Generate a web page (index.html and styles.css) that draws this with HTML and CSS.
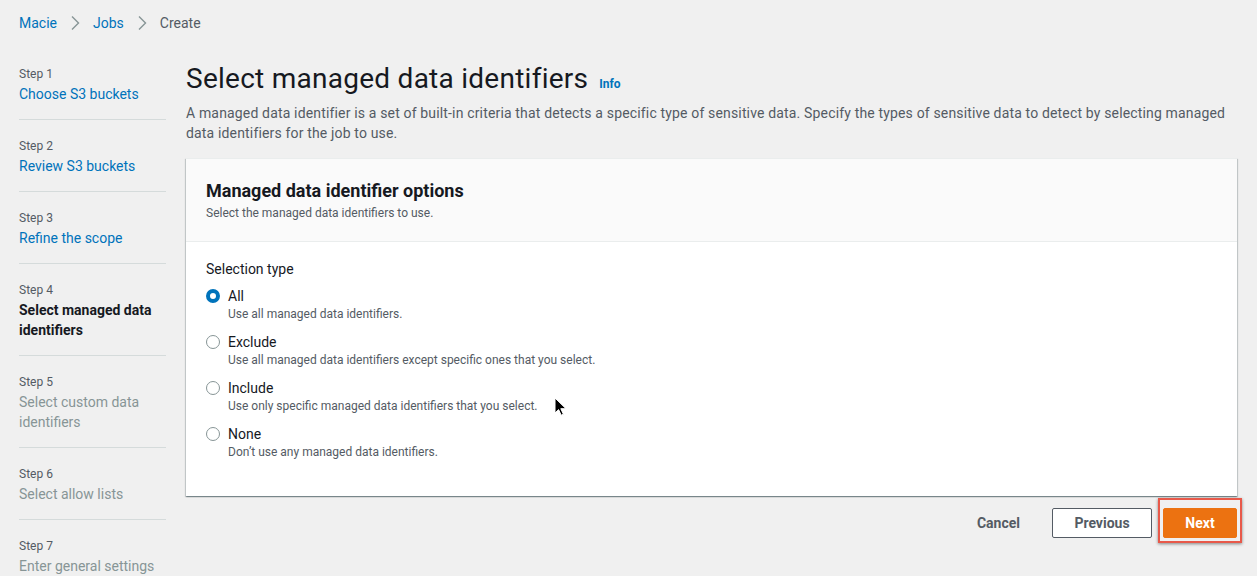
FILE: index.html
```html
<!DOCTYPE html>
<html lang="en">
<head>
<meta charset="utf-8">
<title>Select managed data identifiers</title>
<link rel="stylesheet" href="styles.css">
</head>
<body>
<div class="page">
  <nav class="breadcrumbs">
    <a class="crumb" href="#">Macie</a>
    <svg class="chev" viewBox="0 0 16 16" width="16" height="16"><path d="M5 1.5 11.5 8 5 14.5" fill="none" stroke="currentColor" stroke-width="1.4"/></svg>
    <a class="crumb" href="#">Jobs</a>
    <svg class="chev" viewBox="0 0 16 16" width="16" height="16"><path d="M5 1.5 11.5 8 5 14.5" fill="none" stroke="currentColor" stroke-width="1.4"/></svg>
    <span class="crumb current">Create</span>
  </nav>

  <div class="layout">
    <ol class="steps">
      <li class="step"><div class="step-num">Step 1</div><a class="step-link" href="#">Choose S3 buckets</a></li>
      <li class="step"><div class="step-num">Step 2</div><a class="step-link" href="#">Review S3 buckets</a></li>
      <li class="step"><div class="step-num">Step 3</div><a class="step-link" href="#">Refine the scope</a></li>
      <li class="step"><div class="step-num">Step 4</div><span class="step-link active">Select managed data identifiers</span></li>
      <li class="step"><div class="step-num">Step 5</div><span class="step-link disabled">Select custom data identifiers</span></li>
      <li class="step"><div class="step-num">Step 6</div><span class="step-link disabled">Select allow lists</span></li>
      <li class="step"><div class="step-num">Step 7</div><span class="step-link disabled">Enter general settings</span></li>
    </ol>

    <main class="main">
      <div class="page-head">
        <h1 class="title">Select managed data identifiers</h1>
        <a class="info" href="#">Info</a>
      </div>
      <p class="lead">A managed data identifier is a set of built-in criteria that detects a specific type of sensitive data. Specify the types of sensitive data to detect by selecting managed data identifiers for the job to use.</p>

      <section class="container">
        <header class="container-head">
          <h2 class="container-title">Managed data identifier options</h2>
          <p class="container-sub">Select the managed data identifiers to use.</p>
        </header>
        <div class="container-body">
          <div class="field-label">Selection type</div>
          <div class="radio-group">
            <div class="radio-item">
              <span class="radio checked"></span>
              <div class="radio-text">
                <div class="radio-label">All</div>
                <div class="radio-desc">Use all managed data identifiers.</div>
              </div>
            </div>
            <div class="radio-item">
              <span class="radio"></span>
              <div class="radio-text">
                <div class="radio-label">Exclude</div>
                <div class="radio-desc">Use all managed data identifiers except specific ones that you select.</div>
              </div>
            </div>
            <div class="radio-item">
              <span class="radio"></span>
              <div class="radio-text">
                <div class="radio-label">Include</div>
                <div class="radio-desc">Use only specific managed data identifiers that you select.</div>
              </div>
            </div>
            <div class="radio-item">
              <span class="radio"></span>
              <div class="radio-text">
                <div class="radio-label">None</div>
                <div class="radio-desc">Don’t use any managed data identifiers.</div>
              </div>
            </div>
          </div>
        </div>
      </section>

      <div class="actions">
        <button class="btn btn-link">Cancel</button>
        <button class="btn btn-normal">Previous</button>
        <span class="highlight"><button class="btn btn-primary">Next</button></span>
      </div>
    </main>
  </div>

  <svg class="cursor" viewBox="0 0 12 19" width="12" height="19"><path d="M1 1v15l3.6-3.4 2.6 5.6 2.2-1-2.6-5.5H12z" fill="#000" stroke="#fff" stroke-width="1"/></svg>
</div>
</body>
</html>
```

FILE: styles.css
```css
* { box-sizing: border-box; }
html, body { margin: 0; padding: 0; }
body {
  background: #f0f0f0;
  font-family: Roboto, "Liberation Sans", Arial, sans-serif;
  color: #16191f;
  font-size: 14px;
  line-height: 20px;
}
a { text-decoration: none; }
.page { position: relative; width: 1257px; height: 576px; overflow: hidden; }

.breadcrumbs {
  display: flex;
  align-items: center;
  gap: 10px;
  padding: 13px 0 0 19px;
  height: 33px;
}
.crumb { color: #0073bb; font-size: 14px; line-height: 20px; }
.crumb.current { color: #545b64; }
.chev { color: #879596; width: 16px; height: 16px; }

.layout {
  display: flex;
  gap: 20px;
  padding: 15px 20px 0 19px;
}

.steps {
  list-style: none;
  margin: 0;
  padding: 0;
  width: 147px;
  flex: none;
}
.step {
  padding: 18px 0 15px;
  border-bottom: 1px solid #d5dbdb;
}
.step-num { font-size: 12px; line-height: 16px; color: #545b64; margin-bottom: 2px; }
.step-link { display: block; color: #0073bb; font-size: 14px; line-height: 20px; }
.step-link.active { color: #16191f; font-weight: 700; }
.step-link.disabled { color: #879596; }

.main { flex: 1; min-width: 0; padding-top: 13px; }
.page-head { display: flex; align-items: baseline; gap: 11px; }
.title { margin: 0; font-size: 28px; line-height: 36px; font-weight: 400; color: #16191f; letter-spacing: 0.26px; }
.info { font-size: 12px; font-weight: 700; color: #0073bb; }
.lead { margin: 6px 0 15px; color: #545b64; font-size: 14px; line-height: 20px; letter-spacing: 0.16px; }

.container {
  background: #fff;
  box-shadow: 0 1px 1px 0 rgba(0, 28, 36, .3), 1px 1px 1px 0 rgba(0, 28, 36, .15), -1px 1px 1px 0 rgba(0, 28, 36, .15);
  border-top: 1px solid #eaeded;
}
.container-head {
  background: #fafafa;
  border-bottom: 1px solid #eaeded;
  padding: 21px 20px 20px;
}
.container-title { margin: 0; font-size: 18px; line-height: 22px; font-weight: 700; color: #16191f; }
.container-sub { margin: 3px 0 0; font-size: 12px; line-height: 16px; color: #545b64; }

.container-body { padding: 17px 20px 36px; }
.field-label { font-size: 14px; line-height: 20px; color: #16191f; margin-bottom: 7px; }
.radio-group { display: flex; flex-direction: column; gap: 10px; }
.radio-item { display: flex; gap: 8px; }
.radio {
  flex: none;
  width: 14px; height: 14px;
  margin-top: 3px;
  border-radius: 50%;
  border: 1px solid #879596;
  background: #fff;
}
.radio.checked { border: 4px solid #0073bb; }
.radio-label { font-size: 14px; line-height: 20px; color: #16191f; }
.radio-desc { font-size: 12px; line-height: 16px; color: #545b64; }

.actions {
  display: flex;
  justify-content: flex-end;
  align-items: center;
  margin-top: 12px;
}
.btn {
  font-family: inherit;
  font-size: 14px;
  font-weight: 700;
  line-height: 20px;
  padding: 4px 20px;
  border-radius: 2px;
  border: 1px solid transparent;
  cursor: pointer;
  height: 30px;
}
.btn-link { background: transparent; color: #545b64; margin-right: 12px; padding: 4px 19px 4px 21px; }
.btn-normal { background: #fff; color: #545b64; border-color: #545b64; width: 100px; margin-right: 6px; }
.btn-primary { background: #ec7211; color: #fff; border-color: #ec7211; width: 74px; }
.highlight {
  display: inline-flex;
  padding: 8px 3px 3px;
  border: 2px solid #e8594a;
  box-shadow: 0 1px 3px rgba(0, 0, 0, .45);
  margin: -10px -5px -5px 0;
}

.cursor { position: absolute; left: 554px; top: 397px; }
```
